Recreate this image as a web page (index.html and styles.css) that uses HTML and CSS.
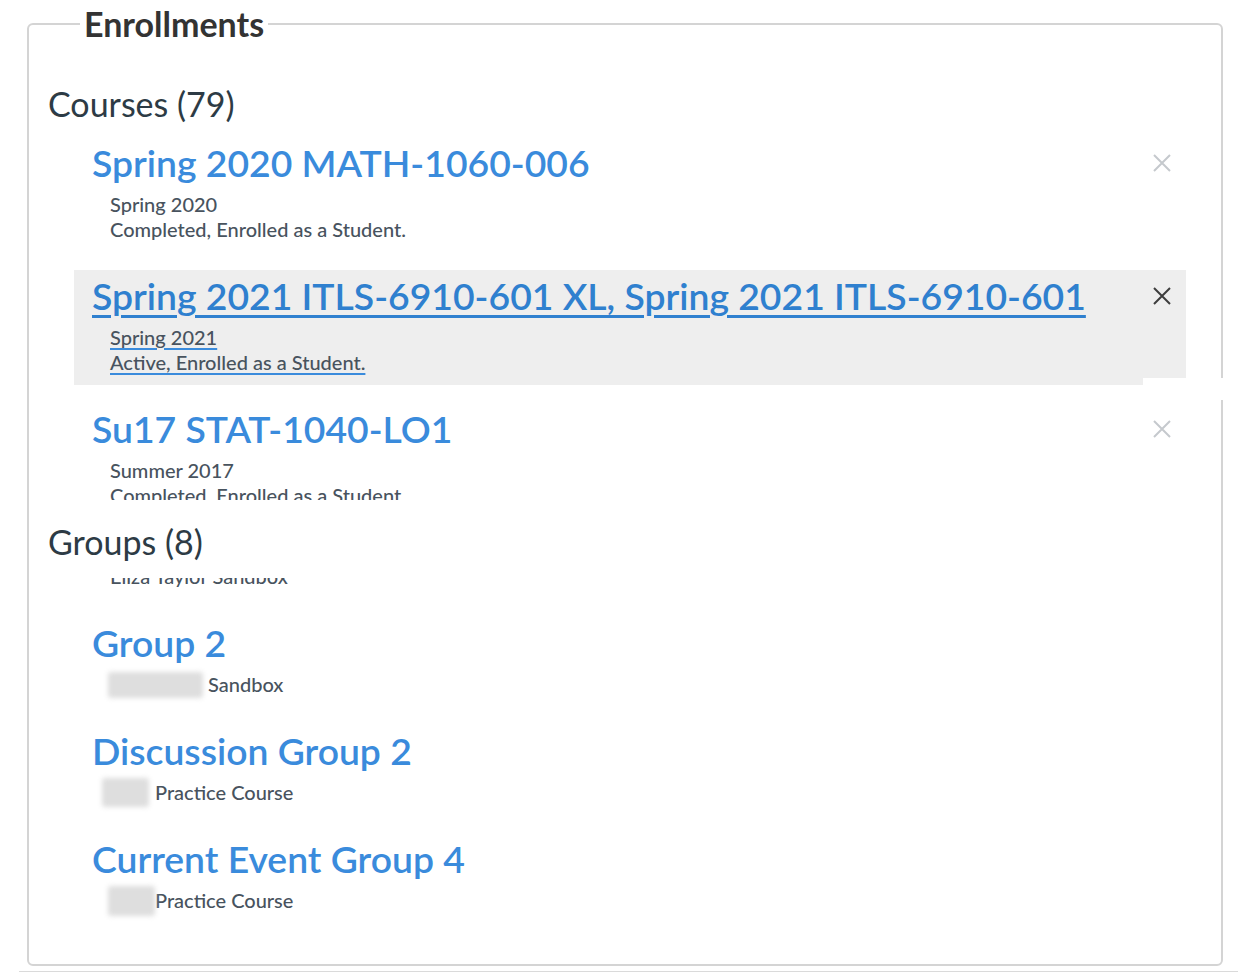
FILE: index.html
```html
<!DOCTYPE html>
<html lang="en">
<head>
<meta charset="utf-8">
<title>Enrollments</title>
<link rel="stylesheet" href="styles.css">
</head>
<body>
<div class="page">
  <fieldset class="enrollments">
    <legend class="legend">Enrollments</legend>

    <h2 class="section-title">Courses (79)</h2>
    <div class="viewport courses-viewport">
      <ul class="list">
        <li class="item">
          <a class="item-link" href="#">
            <span class="item-title">Spring 2020 MATH-1060-006</span>
            <span class="item-meta">
              <span class="meta-line">Spring 2020</span>
              <span class="meta-line">Completed, Enrolled as a Student.</span>
            </span>
          </a>
          <button class="remove" type="button" aria-label="Remove">
            <svg viewBox="0 0 20 20" width="20" height="20"><path d="M2 2 L18 18 M18 2 L2 18" /></svg>
          </button>
        </li>
        <li class="item is-hover">
          <a class="item-link" href="#">
            <span class="item-title">Spring 2021 ITLS-6910-601 XL, Spring 2021 ITLS-6910-601</span>
            <span class="item-meta">
              <span class="meta-line">Spring 2021</span>
              <span class="meta-line">Active, Enrolled as a Student.</span>
            </span>
          </a>
          <button class="remove" type="button" aria-label="Remove">
            <svg viewBox="0 0 20 20" width="20" height="20"><path d="M2 2 L18 18 M18 2 L2 18" /></svg>
          </button>
        </li>
        <li class="item">
          <a class="item-link" href="#">
            <span class="item-title">Su17 STAT-1040-LO1</span>
            <span class="item-meta">
              <span class="meta-line">Summer 2017</span>
              <span class="meta-line">Completed, Enrolled as a Student.</span>
            </span>
          </a>
          <button class="remove" type="button" aria-label="Remove">
            <svg viewBox="0 0 20 20" width="20" height="20"><path d="M2 2 L18 18 M18 2 L2 18" /></svg>
          </button>
        </li>
      </ul>
    </div>

    <h2 class="section-title groups-title">Groups (8)</h2>
    <div class="viewport groups-viewport">
      <ul class="list groups-list">
        <li class="item">
          <a class="item-link" href="#">
            <span class="item-title">Group 1</span>
            <span class="item-meta">
              <span class="meta-line">Eliza Taylor Sandbox</span>
            </span>
          </a>
        </li>
        <li class="item">
          <a class="item-link" href="#">
            <span class="item-title">Group 2</span>
            <span class="item-meta">
              <span class="meta-line"><span class="redacted redacted-wide"></span>Sandbox</span>
            </span>
          </a>
        </li>
        <li class="item">
          <a class="item-link" href="#">
            <span class="item-title">Discussion Group 2</span>
            <span class="item-meta">
              <span class="meta-line"><span class="redacted redacted-shift"></span>Practice Course</span>
            </span>
          </a>
        </li>
        <li class="item">
          <a class="item-link" href="#">
            <span class="item-title">Current Event Group 4</span>
            <span class="item-meta">
              <span class="meta-line"><span class="redacted redacted-tight"></span>Practice Course</span>
            </span>
          </a>
        </li>
      </ul>
    </div>
  </fieldset>
  <div class="next-section"></div>
</div>
<div class="edge-patch"></div>
</body>
</html>
```

FILE: styles.css
```css
* {
  box-sizing: border-box;
}

html,
body {
  margin: 0;
  background: #ffffff;
}

body {
  font-family: Lato, "Open Sans", "Liberation Sans", sans-serif;
  color: #2d3b45;
  position: relative;
  height: 972px;
  overflow: hidden;
}

.page {
  padding: 5px 15px 0 27px;
}

.enrollments {
  margin: 0;
  min-width: 0;
  border: 2px solid #d4d4d4;
  border-radius: 6px;
  padding: 0 35px 22px 19px;
}

.legend {
  margin-left: 32px;
  padding: 0 4px;
  font-size: 34px;
  font-weight: 700;
  line-height: 38px;
  color: #333333;
}

.section-title {
  margin: 40px 0 12px;
  font-size: 34px;
  font-weight: 400;
  line-height: 42px;
  color: #2d3b45;
}

.groups-title {
  margin: 21px 0 15px;
}

.viewport {
  margin-left: 26px;
  overflow: hidden;
}

.courses-viewport {
  height: 363px;
}

.groups-viewport {
  height: 364px;
}

.list {
  list-style: none;
  margin: 0;
  padding: 0;
}

.groups-list {
  margin-top: -69px;
}

.item {
  display: flex;
  justify-content: space-between;
  align-items: flex-start;
  padding: 3px 14px 10px 18px;
  margin-bottom: 18px;
}

.item.is-hover {
  background: #eeeeee;
}

.item-link {
  display: flex;
  flex-direction: column;
  text-decoration: none;
  color: inherit;
}

.item-title {
  font-size: 37.3px;
  font-weight: 600;
  line-height: 46px;
  color: #3a8bdc;
  white-space: nowrap;
}

.item-meta {
  display: flex;
  flex-direction: column;
  align-items: flex-start;
  margin-top: 6px;
  padding-left: 18px;
  font-size: 20px;
  font-weight: 500;
  line-height: 25px;
  color: #48535e;
}

.meta-line {
  display: flex;
  align-items: center;
  white-space: nowrap;
}

.is-hover .item-title {
  color: #2f80cf;
  text-decoration: underline;
  text-decoration-thickness: 3px;
  text-underline-offset: 5px;
}

.is-hover .meta-line {
  text-decoration: underline;
  text-decoration-color: #3a8bdc;
  text-decoration-thickness: 2px;
  text-underline-offset: 3px;
}

.remove {
  flex: none;
  width: 20px;
  height: 20px;
  margin-top: 13px;
  padding: 0;
  border: 0;
  background: none;
  cursor: pointer;
}

.remove svg {
  display: block;
  fill: none;
  stroke: #c5c9cd;
  stroke-width: 2;
}

.is-hover .remove svg {
  stroke: #3d3d3d;
}

.redacted {
  display: inline-block;
  height: 25px;
  background: #dedede;
  filter: blur(2.5px);
  border-radius: 3px;
}

.redacted-wide {
  width: 95px;
  margin: -1px 5px -1px -2px;
  height: 26px;
}

.redacted-shift {
  width: 47px;
  height: 29px;
  margin: -2px 6px -2px -8px;
}

.redacted-tight {
  width: 47px;
  height: 30px;
  margin: -2.5px 0 -2.5px -2px;
}

.next-section {
  margin: 5px -15px 0 -8px;
  border-top: 2px solid #dadada;
}

.edge-patch {
  position: absolute;
  left: 1143px;
  top: 378px;
  width: 95px;
  height: 22px;
  background: #ffffff;
}
```
